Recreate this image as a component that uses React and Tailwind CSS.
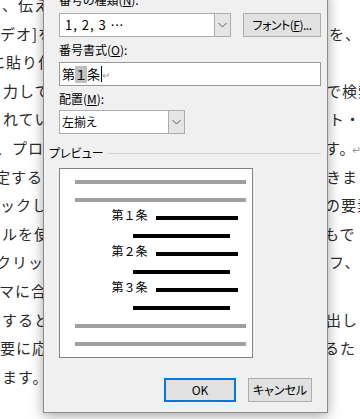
import React from "react";

const lines = [
  { l: "、伝え", lc: "ml-[2px]", r: "", rc: "" },
  { l: "デオ]を", lc: "ml-[0px]", r: "を、", rc: "ml-[5px]" },
  { l: "に貼り付け", lc: "ml-[-10px]", r: "", rc: "" },
  { l: "力して", lc: "ml-[3px]", r: "で検索", rc: "ml-[2px]" },
  { l: "れている", lc: "ml-[3px]", r: "ト・ホ", rc: "ml-[5px]" },
  { l: "、プロの", lc: "ml-[-4px]", r: "す。", rc: "ml-[1px]", mark: true },
  { l: "定するま", lc: "ml-[-5px]", r: "きま", rc: "ml-[2px]" },
  { l: "ックして", lc: "ml-[0px]", r: "の要素", rc: "ml-[1px]" },
  { l: "ルを使", lc: "ml-[2px]", r: "もで", rc: "ml-[0px]" },
  { l: "クリック", lc: "ml-[-4px]", r: "フ、", rc: "ml-[5px]" },
  { l: "マに合う", lc: "ml-[-1px]", r: "", rc: "" },
  { l: "すると", lc: "ml-[2px]", r: "出し", rc: "ml-[2px]" },
  { l: "要に応", lc: "ml-[0px]", r: "るた", rc: "ml-[0px]" },
  { l: "ます。", lc: "ml-[2px]", r: "", rc: "" },
];

function Chevron() {
  return (
    <svg width="9" height="6" viewBox="0 0 9 6">
      <polyline points="0.5,1 4.5,5 8.5,1" fill="none" stroke="#606060" strokeWidth="1" />
    </svg>
  );
}

function Doc() {
  return (
    <div className="mt-[-9px] font-['Noto_Sans_CJK_JP',sans-serif] text-[15px] tracking-[1px] text-[#2a2a2a]">
      {lines.map((ln, i) => (
        <div key={i} className="flex h-[28.6px] items-center whitespace-nowrap">
          <div className="w-[324px] shrink-0 overflow-hidden">
            <span className={"inline-block " + ln.lc}>{ln.l}</span>
          </div>
          <span className={"inline-block " + ln.rc}>
            {ln.r}
            {ln.mark && <span className="ml-[-4px] text-[11px] text-[#999]">↵</span>}
          </span>
        </div>
      ))}
    </div>
  );
}

function PreviewRow({ kind, label }) {
  if (kind === "gray") return <div className="ml-[15px] h-[4px] w-[171px] bg-[#a0a0a0]" />;
  if (kind === "sub") return <div className="ml-[73px] h-[4px] w-[97px] bg-black" />;
  return (
    <div className="flex h-[4px] items-center">
      <div className="mb-[7px] flex w-[96px] shrink-0 justify-end pr-[7px] text-[12px] leading-[16px] tracking-[1.5px]">
        {label}
      </div>
      <div className="h-[4px] w-[82px] bg-black" />
    </div>
  );
}

function Dialog() {
  return (
    <div className="absolute left-[43px] top-[-9px] w-[285px] border border-[#8c8c8c] bg-[#f0f0f0] pb-[10px] pl-[15px] pr-[6px] text-[12px] text-black shadow-[0_3px_12px_rgba(0,0,0,0.35)] font-['Noto_Sans_CJK_JP',sans-serif] [font-feature-settings:'palt']">
      <div className="h-[16px] leading-[16px]">
        番号の種類(<span className="underline">N</span>):
      </div>

      <div className="mt-[5px] flex">
        <div className="flex h-[24px] w-[172px] border border-[#adadad] bg-white">
          <div className="flex flex-1 items-center pl-[5px] text-[13px] tracking-[1px]">1, 2, 3 …</div>
          <div className="flex w-[16px] items-center justify-center border-l border-[#adadad] bg-[#e5e5e5]">
            <Chevron />
          </div>
        </div>
        <button className="ml-auto flex h-[24px] w-[78px] items-center justify-center border border-[#adadad] bg-[#e1e1e1] text-[12px] tracking-[-0.5px]">
          フォント(<span className="underline">F</span>)...
        </button>
      </div>

      <div className="mt-[5px] h-[16px] leading-[16px]">
        番号書式(<span className="underline">O</span>):
      </div>
      <div className="mt-[4px] flex h-[24px] items-center border border-[#999999] bg-white pl-[2px] text-[13px]">
        <span>第</span>
        <span className="bg-[#c0c0c0] px-[1px] leading-[17px]">１</span>
        <span>条</span>
        <span className="ml-[1px] h-[16px] w-px bg-black" />
        <span className="text-[10px] text-[#999]">↵</span>
      </div>

      <div className="mt-[5px] h-[16px] leading-[16px]">
        配置(<span className="underline">M</span>):
      </div>
      <div className="mt-[3px] flex h-[24px] w-[126px] border border-[#adadad] bg-white">
        <div className="flex flex-1 items-center pl-[2px]">左揃え</div>
        <div className="flex w-[16px] items-center justify-center border-l border-[#adadad] bg-[#e5e5e5]">
          <Chevron />
        </div>
      </div>

      <div className="mt-[11px] ml-[-10px] flex h-[16px] items-center">
        <span className="leading-[16px]">プレビュー</span>
        <div className="ml-[4px] h-px flex-1 bg-[#d5d5d5]" />
      </div>
      <div className="mt-[7px] flex h-[190px] w-[194px] flex-col gap-[14px] border border-[#828282] bg-white pt-[11px]">
        <PreviewRow kind="gray" />
        <PreviewRow kind="gray" />
        <PreviewRow kind="num" label="第１条" />
        <PreviewRow kind="sub" />
        <PreviewRow kind="num" label="第２条" />
        <PreviewRow kind="sub" />
        <PreviewRow kind="num" label="第３条" />
        <PreviewRow kind="sub" />
        <PreviewRow kind="gray" />
        <PreviewRow kind="gray" />
      </div>

      <div className="mt-[20px] mr-[9px] flex justify-end gap-[12px]">
        <button className="flex h-[24px] w-[72px] items-center justify-center border-2 border-[#0078d7] bg-[#e1e1e1]">OK</button>
        <button className="flex h-[24px] w-[64px] items-center justify-center border border-[#adadad] bg-[#e1e1e1]">キャンセル</button>
      </div>
    </div>
  );
}

export default function App() {
  return (
    <div className="relative h-[419px] w-[360px] overflow-hidden bg-white">
      <Doc />
      <Dialog />
    </div>
  );
}
